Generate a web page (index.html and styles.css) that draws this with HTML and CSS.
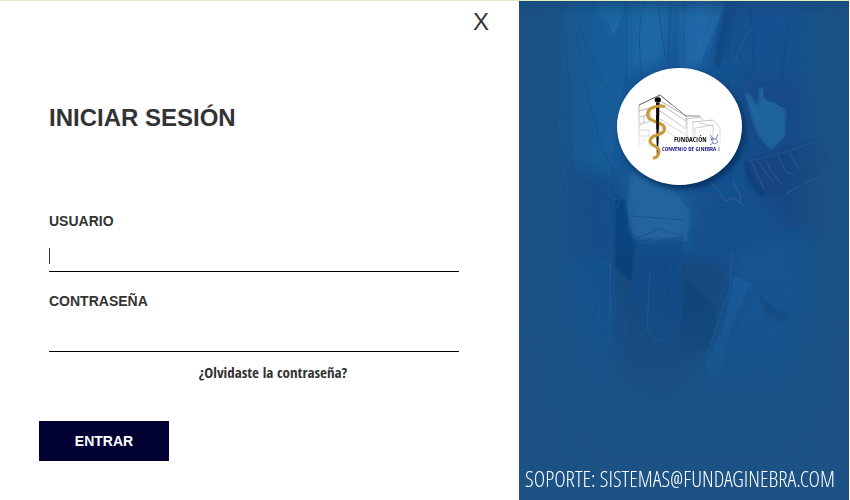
FILE: index.html
```html
<!DOCTYPE html>
<html lang="es">
<head>
<meta charset="utf-8">
<meta name="viewport" content="width=device-width, initial-scale=1">
<title>Iniciar sesión</title>
<link rel="stylesheet" href="styles.css">
</head>
<body>
<main class="window">
  <section class="login">
    <button class="close" type="button">X</button>
    <h1 class="title">INICIAR SESIÓN</h1>
    <form class="form">
      <div class="field">
        <label for="user">USUARIO</label>
        <input class="active" id="user" type="text">
      </div>
      <div class="field">
        <label for="password">CONTRASEÑA</label>
        <input id="password" type="password">
      </div>
      <a class="forgot" href="#">¿Olvidaste la contraseña?</a>
      <button class="submit" type="submit">ENTRAR</button>
    </form>
  </section>
  <aside class="brand">
    <svg class="backdrop" viewBox="0 0 330 499" preserveAspectRatio="xMidYMin slice" aria-hidden="true">
      <defs>
        <filter id="soft" x="-20%" y="-20%" width="140%" height="140%"><feGaussianBlur stdDeviation="8"/></filter>
        <filter id="edge" x="-20%" y="-20%" width="140%" height="140%"><feGaussianBlur stdDeviation="1"/></filter>
        <linearGradient id="sides">
          <stop offset="0" stop-color="#1c5284"/>
          <stop offset=".08" stop-color="#1c5284" stop-opacity=".85"/>
          <stop offset=".26" stop-color="#1c5284" stop-opacity="0"/>
          <stop offset=".8" stop-color="#1c5284" stop-opacity="0"/>
          <stop offset=".94" stop-color="#1c5284" stop-opacity=".85"/>
          <stop offset="1" stop-color="#1c5284"/>
        </linearGradient>
        <linearGradient id="foot" x2="0" y2="1">
          <stop offset="0" stop-color="#164a7c" stop-opacity=".7"/>
          <stop offset=".03" stop-color="#164a7c" stop-opacity="0"/>
          <stop offset=".55" stop-color="#1c5284" stop-opacity="0"/>
          <stop offset=".85" stop-color="#1c5284" stop-opacity=".9"/>
          <stop offset="1" stop-color="#1c5284"/>
        </linearGradient>
      </defs>
      <rect width="330" height="499" fill="#145290"/>
      <g filter="url(#soft)">
        <path d="M45 -10H158L148 60L110 75L95 190L50 160L38 60Z" fill="#185d9a"/>
        <path d="M112 -10H158L145 62L115 75Z" fill="#1f67a5"/>
        <path d="M162 -10H204L188 66H162Z" fill="#1c64a4"/>
        <path d="M220 -10H280L262 80L215 60Z" fill="#13508f"/>
        <path d="M215 75H290V150L228 165Z" fill="#124b88"/>
        <path d="M40 160L95 175L100 260H40Z" fill="#144e8a"/>
        <path d="M225 160L310 145V240L235 215Z" fill="#134a84"/>
        <path d="M108 165H175L165 245H112Z" fill="#1a5d9a"/>
        <path d="M175 185L235 190L300 270L213 275L200 330L175 290Z" fill="#154f8e"/>
        <path d="M95 245L215 265L190 350L150 400L100 380Z" fill="#15487e"/>
        <path d="M217 250L285 240L285 320L240 380L215 360Z" fill="#175592"/>
      </g>
      <g filter="url(#edge)">
        <path d="M73 0H105L101 22L95 35L88 20Z" fill="#206ba6" opacity=".55"/>
        <path d="M162 10L180 0H206L195 30L178 70H162Z" fill="#226daa" opacity=".4"/>
        <path d="M206 0H218L201 65L194 62Z" fill="#104581" opacity=".6"/>
        <path d="M226 92L231 93L239 105L240 88L243 85L245 98L258 103L267 110L266 136L252 149L240 136L233 118Z" fill="#2169a6" opacity=".75"/>
        <path d="M225 161L245 152L275 145L305 134L310 160L275 190L240 194L228 178Z" fill="#0f427f" opacity=".45"/>
        <path d="M112 170L155 191L172 210L168 240L130 243L109 232L108 207Z" fill="#256aa5" opacity=".55"/>
        <path d="M97 195L106 199L111 224L117 242L113 280L96 267Z" fill="#0b3c73" opacity=".55"/>
        <path d="M117 238L164 236L162 315L151 340L136 344L128 333L110 300Z" fill="#164d89" opacity=".7"/>
        <path d="M166 280L195 305L197 325L190 350H160Z" fill="#0c3b71" opacity=".35"/>
        <path d="M215 275L232 282L212 325L200 375L188 376L187 362L204 326Z" fill="#1b5c9e" opacity=".8"/>
        <path d="M237 289L258 350L222 370L215 340Z" fill="#1c579a" opacity=".45"/>
        <path d="M238 290L252 306L272 314L260 320L248 314Z" fill="#0f4277" opacity=".55"/>
        <path d="M226 159L236 181L248 194L242 195L229 177Z" fill="#083b76" opacity=".7"/>
      </g>
      <g fill="none" stroke-width="1">
        <path stroke="#0c407d" opacity=".4" d="M43 8Q48 90 37 165M40 10Q55 80 52 170M57 30Q65 85 81 140L98 180M60 20Q70 60 94 100M107 0V110M125 0Q115 40 127 100M138 0L146 55M152 0L149 60M199 40L176 67M208 5L196 68M219 0L207 60M232 5L235 70M270 20L262 82M283 15Q297 50 300 90M35 160Q48 185 66 205L99 245M30 165V230M48 165L92 200M112 215L165 219M116 238L140 228L165 235M98 200V265M145 260L151 324L160 310L164 265M158 250L149 290L158 323M110 305L114 352M165 0V64M217 137L211 180"/>
        <path stroke="#3c7db5" opacity=".3" d="M77 5L92 35L100 15M51 0Q40 30 45 75L40 130M161 0V65M188 15L176 68M195 18L180 65M204 0L193 35M240 20Q223 35 216 61M226 92L231 104L240 120M242 86L245 101L267 108M230 160L271 150L308 136M122 214L137 221L151 217L160 228L140 224M112 235L126 243L145 235M94 198H101L98 208M214 252L210 290L188 354M91 256V342M45 163L49 190M131 270L128 328Q139 347 151 334"/>
        <path stroke="#5c8fbb" opacity=".3" d="M191 180L207 200L215 197L224 204M214 181L222 195L220 202M233 161L245 188M239 160L254 181M247 159L251 169L264 184M259 155L267 171L276 174M270 152L280 168M267 193L290 180L305 176"/>
        <path stroke="#376fa2" opacity=".25" d="M101 460Q100 420 137 417Q172 423 168 460M123 420V460M80 300V370M55 250V340"/>
      </g>
      <rect width="330" height="499" fill="url(#sides)"/>
      <rect width="330" height="499" fill="url(#foot)"/>
    </svg>
    <svg class="logo" viewBox="0 0 125 117" role="img" aria-label="Fundación Convenio de Ginebra">
      <defs>
        <linearGradient id="fade" x2="0" y2="1"><stop offset="0" stop-color="#777"/><stop offset="1" stop-color="#eee"/></linearGradient>
      </defs>
      <ellipse cx="62.5" cy="58.5" rx="62.5" ry="58.5" fill="#fff"/>
      <g fill="none" stroke="url(#fade)" stroke-width=".7">
        <path d="M22 82V37L43 27L55 37M42 28V80M22 43L33 40V46L23 49M27 48V54L22 56M33 46V53L23 57M23 62H32V68H23M27 69V75H22M32 75V82M43 36L69 53M43 43L69 61M43 51L72 69M43 59L60 70M45 34L69 48V60M70 50V70M76 53V71M69 51L84 49L86 52M76 54L96 52L103 60V76M78 60L96 57V75M78 60V70M82 55L96 58"/>
        <path stroke="#555" d="M22 37L43 27L69 48L83 48"/>
      </g>
      <path d="M39 35H42.4L41 87L39.8 88Z" fill="#080808"/>
      <ellipse cx="40.8" cy="32" rx="3.2" ry="2.8" fill="#080808"/>
      <path d="M48 38.500C39 37 30.500 40 30.500 46.500C30.500 55 47.500 53 47.500 60.500C47.500 69 33 65 33 73C33 79 43 77 42 84C41.500 88 39 90 36 90" fill="none" stroke="#c99a35" stroke-width="3"/>
      <path d="M39 47L42 48L41.500 62L39.600 61ZM39.800 69H41.400L41.200 76L39.900 75Z" fill="#080808"/>
      <text class="logo-name" x="57" y="74">FUNDACIÓN</text>
      <text class="logo-place" x="45" y="83">CONVENIO DE GINEBRA</text>
      <path d="M93 67L96 70L97 72M101 66L99 71L94 71L96 75L93 77M99 71L101 74L98 76L96 75M93 69L96 72M102 79V83" fill="none" stroke="#626bb5" stroke-width=".8"/>
    </svg>
    <p class="support">SOPORTE: SISTEMAS@FUNDAGINEBRA.COM</p>
  </aside>
</main>
</body>
</html>
```
FILE: styles.css
```css
* { box-sizing: border-box; }

body {
  margin: 0;
  background: #fff;
  color: #333;
  font-family: Arial, "Liberation Sans", sans-serif;
}

.window {
  display: grid;
  grid-template-columns: 519fr 330fr;
  min-height: 100vh;
  padding-right: 1px;
  border-top: 1px solid #e4ebc1;
}

.login {
  display: flex;
  flex-direction: column;
  padding: 7px 30px 0 39px;
}

button {
  border: 0;
  font-family: inherit;
}

.close {
  align-self: flex-end;
  padding: 0;
  background: none;
  color: #333;
  font-size: 24px;
  line-height: 28px;
}

.title {
  margin: 68px 10px 0;
  font-size: 24px;
  line-height: 28px;
}

.form {
  display: flex;
  flex-direction: column;
  padding-top: 79px;
}

.field {
  display: flex;
  flex-direction: column;
  margin: 0 30px 0 10px;
  font-size: 14px;
  font-weight: bold;
  line-height: 20px;
}

.field + .field {
  margin-top: 19px;
}

.field input {
  height: 30px;
  margin-top: 11px;
  padding: 0;
  border: 0;
  border-bottom: 1px solid #000;
  outline: 0;
  background: none;
  color: #333;
  font-size: 14px;
}

.field .active {
  background: linear-gradient(#333, #333) 0 6px / 1px 16px no-repeat;
}

.forgot {
  align-self: center;
  margin: 10px 0 0 18px;
  color: #333;
  font-family: "Agency FB", "Open Sans Condensed", sans-serif;
  font-size: 15px;
  font-weight: bold;
  line-height: 20px;
  text-decoration: none;
}

.submit {
  width: 130px;
  height: 40px;
  margin-top: 39px;
  background: #000033;
  color: #fff;
  font-size: 14px;
  font-weight: bold;
}

.brand {
  position: relative;
  display: flex;
  flex-direction: column;
  align-items: center;
  overflow: hidden;
  background: #1c5284;
}

.backdrop {
  position: absolute;
  inset: 0;
  width: 100%;
  height: 100%;
}

.logo {
  position: relative;
  width: 125px;
  margin-top: 67px;
  margin-right: 10px;
  filter: drop-shadow(3px 4px 3px #06305f);
}

.logo-name {
  fill: #111;
  font-family: "Open Sans Condensed", sans-serif;
  font-size: 7px;
  font-weight: bold;
}

.logo-place {
  fill: #20208a;
  font-family: "Open Sans Condensed", sans-serif;
  font-size: 6px;
  font-weight: bold;
}

.support {
  position: relative;
  margin: auto 0 8px;
  padding-right: 8px;
  color: #fff;
  font-family: "Agency FB", "Open Sans Condensed Light", "Open Sans Condensed", sans-serif;
  font-size: 22px;
  font-weight: 300;
  line-height: 28px;
  white-space: nowrap;
}
```
